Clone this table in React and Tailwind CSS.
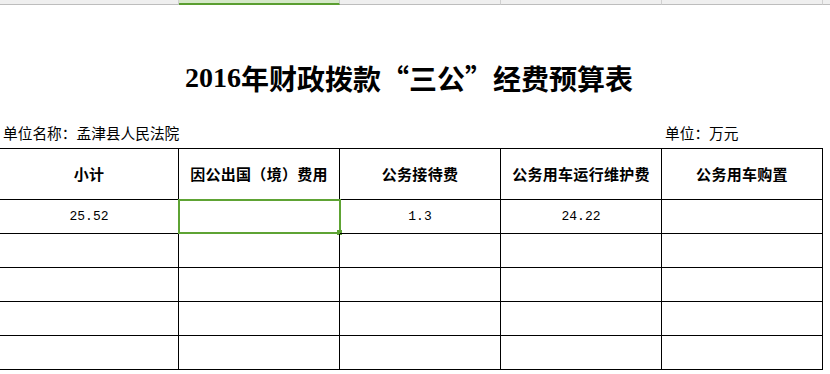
import React from "react";

const cols = ["A", "B", "C", "D", "E"];
const heads = ["小计", "因公出国（境）费用", "公务接待费", "公务用车运行维护费", "公务用车购置"];
const rows = [
  ["25.52", "", "1.3", "24.22", ""],
  ["", "", "", "", ""],
  ["", "", "", "", ""],
  ["", "", "", "", ""],
  ["", "", "", "", ""],
];

const cjk = { fontFamily: '"Noto Sans CJK SC", "Noto Sans", sans-serif' };

const App = () => {
  return (
    <div className="w-[830px] h-[374px] bg-white overflow-hidden text-black" style={cjk}>
      {/* column header strip (scrolled mostly out of view) */}
      <div className="flex h-[5px]">
        {cols.map((c, i) => (
          <div
            key={c}
            className={
              i === 1
                ? "h-[5px] w-[161px] overflow-hidden bg-[#d5e8c8] border-b-2 border-[#5a9e30] border-r border-r-[#c8c8c8] text-center text-[#3d7d1c]"
                : i === 0
                ? "h-[5px] w-[179px] overflow-hidden bg-[#efefef] border-b border-[#bdbdbd] border-r border-r-[#d0d0d0] text-center text-[#555]"
                : "h-[5px] w-[161px] overflow-hidden bg-[#efefef] border-b border-[#bdbdbd] border-r border-r-[#d0d0d0] text-center text-[#555]"
            }
          >
            <div className="-mt-[11px] text-[11px] leading-[14px]" style={{ fontFamily: '"Liberation Sans", sans-serif' }}>
              {c}
            </div>
          </div>
        ))}
        <div className="h-[5px] flex-1 bg-[#efefef] border-b border-[#bdbdbd]" />
      </div>

      {/* title */}
      <div className="w-[818px] h-[28px] mt-[59px] flex items-center justify-center text-[28px] leading-[28px] font-bold whitespace-nowrap">
        <span style={{ fontFamily: '"Liberation Serif", serif' }}>2016</span>
        <span>年财政拨款“三公”经费预算表</span>
      </div>

      {/* unit line */}
      <div className="flex h-[16px] mt-[33px] text-[14.7px] leading-[16px]">
        <div className="w-[662px] pl-[3px]">单位名称：孟津县人民法院</div>
        <div className="pl-[3px]">单位：万元</div>
      </div>

      {/* table */}
      <div className="mt-[7px] w-[823px] border-t border-black grid grid-cols-[179px_161px_161px_161px_161px]">
        {heads.map((h) => (
          <div
            key={h}
            className="h-[51px] border-r border-b border-black flex items-center justify-center text-[15px] font-bold tracking-[0.3px]"
          >
            {h}
          </div>
        ))}
        {rows.map((r, ri) =>
          r.map((v, ci) => (
            <div
              key={ri + "-" + ci}
              className="relative h-[34px] border-r border-b border-black flex items-center justify-center text-[13px]"
              style={{ fontFamily: '"Liberation Mono", monospace' }}
            >
              {v}
              {ri === 0 && ci === 1 && (
                <div className="absolute -left-[1px] -top-[1px] w-[163px] h-[35px] border-2 border-[#5ea334]">
                  <div className="absolute -right-[3px] -bottom-[3px] w-[5px] h-[5px] bg-[#5ea334]" />
                </div>
              )}
            </div>
          ))
        )}
      </div>
    </div>
  );
};

export default App;
